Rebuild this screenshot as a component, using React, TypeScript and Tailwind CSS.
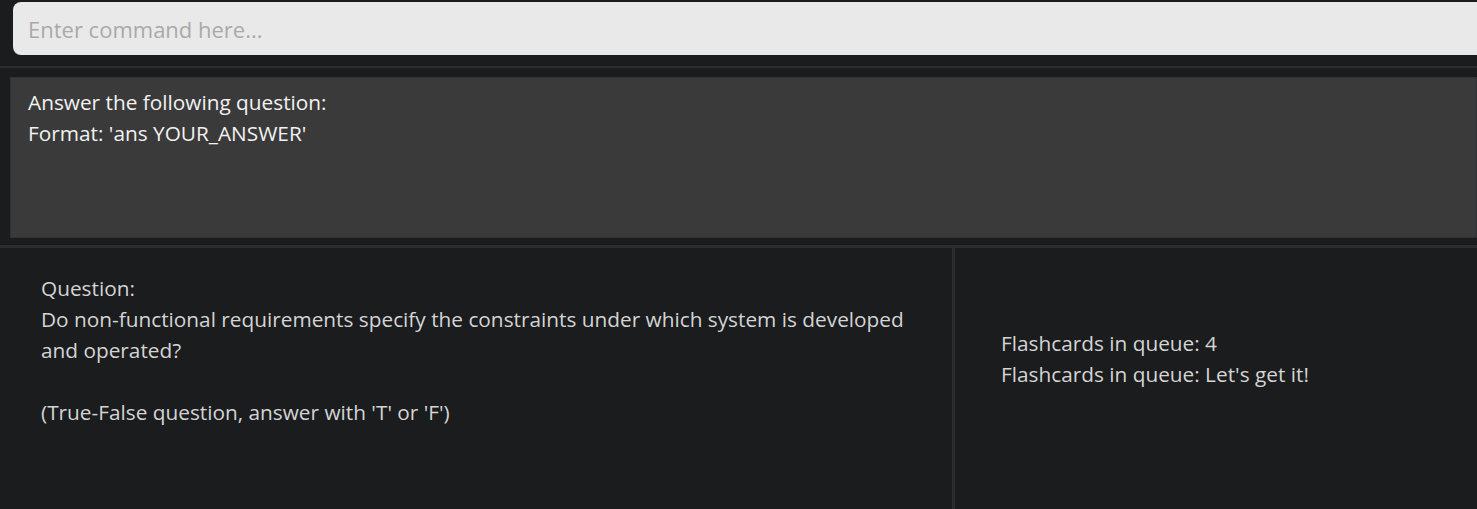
export default function App() {
  return (
    <div className="flex h-[509px] w-full flex-col overflow-hidden bg-[#1b1c1e] font-['Open_Sans',sans-serif] text-[20.8px] leading-[31px]">
      {/* command box */}
      <div className="pl-[13px] pt-[2px]">
        <input
          className="h-[53px] w-full rounded-l-[8px] bg-[#e9e9e9] pl-[15px] text-[22px] text-[#333] outline-none placeholder:text-[#a9a9a9]"
          placeholder="Enter command here..."
        />
      </div>

      <div className="mt-[11px] h-[2px] bg-[#2c2d2f]" />

      {/* result display */}
      <div className="pl-[10px] pt-[9px] pb-[7px]">
        <div className="h-[161px] border border-[#303133] bg-[#3a3a3a] pl-[17px] pt-[9px] text-[#f2f2f2]">
          <div>Answer the following question:</div>
          <div>Format: 'ans YOUR_ANSWER'</div>
        </div>
      </div>

      <div className="h-[3px] bg-[#2c2d2f]" />

      {/* bottom panes */}
      <div className="flex flex-1">
        <div className="w-[952px] shrink-0 pl-[41px] pr-[20px] pt-[25px] text-[#d4d4d4]">
          <div>Question:</div>
          <div>
            Do non-functional requirements specify the constraints under which system is developed
            <br />
            and operated?
          </div>
          <div className="h-[31px]" />
          <div>(True-False question, answer with 'T' or 'F')</div>
        </div>
        <div className="w-[3px] bg-[#2c2d2f]" />
        <div className="flex-1 pl-[46px] pt-[80px] text-[#d4d4d4]">
          <div>Flashcards in queue: 4</div>
          <div>Flashcards in queue: Let's get it!</div>
        </div>
      </div>
    </div>
  );
}
